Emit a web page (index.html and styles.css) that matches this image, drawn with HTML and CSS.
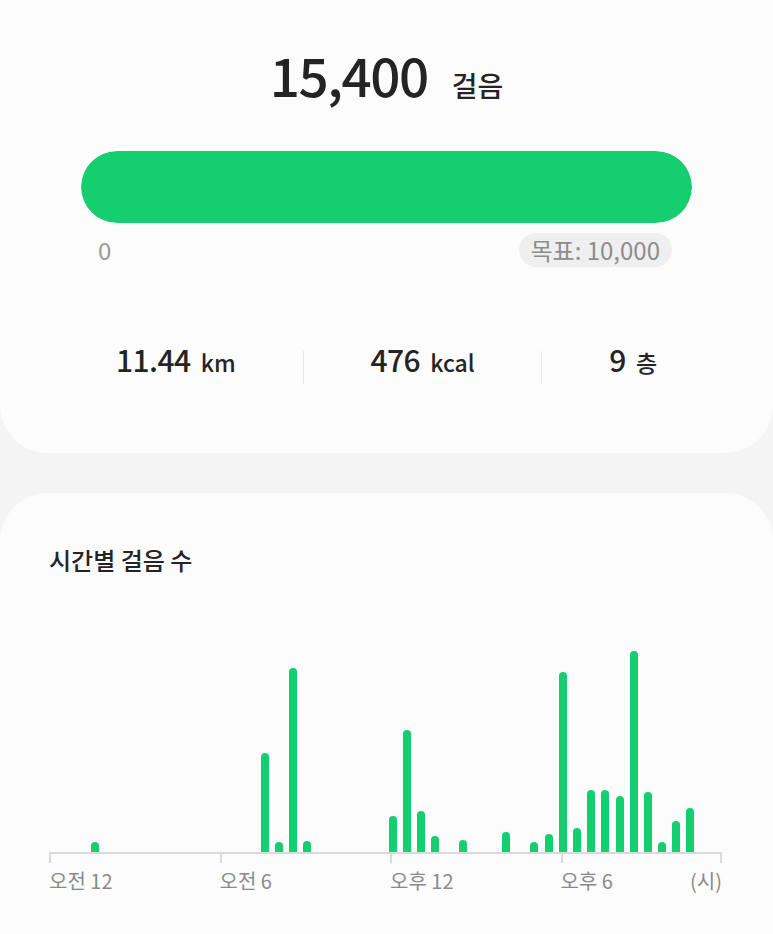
FILE: index.html
```html
<!DOCTYPE html>
<html>
<head>
    <title>걸음</title>
    <link rel="stylesheet" href="styles.css">
</head>
<body>
    <div class="page">
        <section class="card summary">
            <div class="total">
                <span class="total-num">15,400</span>
                <span class="total-unit">걸음</span>
            </div>

            <div class="progress">
                <div class="progress-fill" style="width: 100%"></div>
            </div>
            <div class="progress-labels">
                <span class="zero">0</span>
                <span class="goal">목표: 10,000</span>
            </div>

            <div class="stats">
                <div class="stat"><span class="stat-num">11.44</span><span class="stat-unit">km</span></div>
                <div class="divider"></div>
                <div class="stat"><span class="stat-num">476</span><span class="stat-unit">kcal</span></div>
                <div class="divider"></div>
                <div class="stat"><span class="stat-num">9</span><span class="stat-unit">층</span></div>
            </div>
        </section>

        <section class="card hourly">
            <h3 class="hourly-title">시간별 걸음 수</h3>
            <div class="chart">
                <div class="bars" id="bars"></div>
                <div class="axis-line"></div>
                <div class="axis">
                    <div class="axis-cell"><div class="tick"></div><span>오전 12</span></div>
                    <div class="axis-cell"><div class="tick"></div><span>오전 6</span></div>
                    <div class="axis-cell"><div class="tick"></div><span>오후 12</span></div>
                    <div class="axis-cell"><div class="tick"></div><span>오후 6</span></div>
                    <div class="axis-cell end"><div class="tick"></div><span>(시)</span></div>
                </div>
            </div>
        </section>
    </div>

    <script>
        // steps per 30 minute slot (48 slots)
        const steps = {
            3: 113, 15: 1153, 16: 113, 17: 2153, 18: 132,
            24: 420, 25: 1425, 26: 479, 27: 187, 29: 140,
            32: 230, 34: 113, 35: 210, 36: 2102, 37: 277,
            38: 724, 39: 724, 40: 658, 41: 2348, 42: 704,
            43: 113, 44: 362, 45: 514
        };
        const maxSteps = 2348;
        const maxHeight = 201;

        function drawBars() {
            const bars = document.getElementById("bars");
            let html = "";
            for (let i = 0; i < 48; i++) {
                html += '<div class="slot">';
                if (steps[i]) {
                    const h = (steps[i] / maxSteps * maxHeight).toFixed(1);
                    html += `<div class="bar" style="height: ${h}px"></div>`;
                }
                html += "</div>";
            }
            bars.innerHTML = html;
        }

        drawBars();
    </script>
</body>
</html>
```

FILE: styles.css
```css
body {
    margin: 0;
    background-color: #f4f4f4;
    font-family: "Noto Sans CJK KR", "Noto Sans", sans-serif;
    color: #242424;
}
.page {
    display: flex;
    flex-direction: column;
    gap: 40px;
    height: 934px;
    overflow: hidden;
}
.card {
    background-color: #fcfcfc;
}
.summary {
    padding: 46px 81px 69px;
    border-radius: 0 0 48px 48px;
}
.total {
    display: flex;
    justify-content: center;
    align-items: baseline;
    gap: 24px;
    height: 56px;
    line-height: 56px;
}
.total-num {
    font-size: 53px;
    font-weight: 500;
    letter-spacing: -1.5px;
}
.total-unit {
    font-size: 28px;
    font-weight: 500;
}
.progress {
    margin-top: 49px;
    height: 72px;
    border-radius: 36px;
    background-color: #e8e8e8;
    overflow: hidden;
}
.progress-fill {
    height: 100%;
    border-radius: 36px;
    background-color: #15ce70;
}
.progress-labels {
    display: flex;
    justify-content: space-between;
    height: 34px;
    margin-top: 10px;
    padding-left: 17px;
    font-size: 24px;
    line-height: 34px;
    color: #999;
}
.goal {
    padding: 0 12px;
    margin-right: 20px;
    border-radius: 17px;
    background-color: #efefef;
    color: #8c8c8c;
}
.stats {
    display: flex;
    align-items: flex-start;
    margin: 76px -32px 0 -32px;
}
.stat {
    flex: 1 1 auto;
    height: 33px;
    text-align: center;
    line-height: 33px;
    white-space: nowrap;
}
.stat-num {
    font-size: 30px;
    font-weight: 500;
    letter-spacing: -0.5px;
}
.stat-unit {
    margin-left: 10px;
    font-size: 23px;
    font-weight: 500;
}
.divider {
    width: 1px;
    height: 33px;
    margin-top: 8px;
    background-color: #e6e6e6;
}
.hourly {
    flex: 1;
    padding: 55px 51px 40px 49px;
    border-radius: 48px 48px 0 0;
}
.hourly-title {
    margin: 0;
    font-size: 24px;
    line-height: 24px;
    font-weight: 500;
}
.chart {
    margin-top: 60px;
}
.bars {
    display: flex;
    align-items: flex-end;
    height: 220px;
    margin-left: -1px;
}
.slot {
    flex: 0 0 14.2px;
}
.bar {
    width: 8px;
    border-radius: 4px 4px 0 0;
    background-color: #15ce70;
}
.axis-line {
    height: 2px;
    background-color: #dadada;
}
.axis {
    display: grid;
    grid-template-columns: 170.5px 170.5px 170.5px 1fr auto;
    font-size: 20px;
    line-height: 20px;
    color: #8a8a8a;
}
.axis-cell {
    display: flex;
    flex-direction: column;
    align-items: flex-start;
    gap: 8px;
}
.axis-cell.end {
    align-items: flex-end;
}
.tick {
    width: 2px;
    height: 9px;
    background-color: #dadada;
}
```
